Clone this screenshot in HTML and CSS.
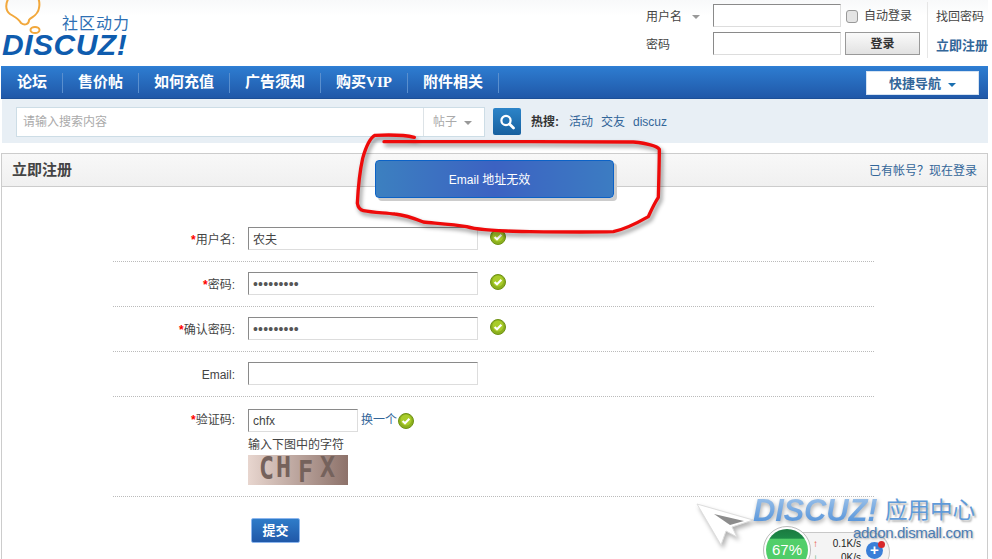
FILE: index.html
```html
<!DOCTYPE html>
<html lang="zh">
<head>
<meta charset="utf-8">
<title>立即注册</title>
<link rel="stylesheet" href="styles.css">
</head>
<body>
<div class="page">
  <header class="head">
    <div class="logo">
      <svg class="bubble" width="40" height="35" viewBox="0 0 40 35">
        <path d="M8 -4 C3 3 3 10 8 14 C13 17 17 19 19 23 C23 26 27 24 27 20 C29 17 36 16 37 8 C38 3 37 -1 35 -4" fill="none" stroke="#f2a83c" stroke-width="2"/>
        <ellipse cx="33" cy="30" rx="4.5" ry="3" fill="none" stroke="#f2a83c" stroke-width="2"/>
      </svg>
      <span class="slogan">社区动力</span>
      <span class="logoword">DISCUZ!</span>
    </div>
    <div class="login">
      <div class="lg-label">用户名 <i class="caret gray"></i></div>
      <input class="field lg-input" type="text">
      <label class="auto"><span class="chk"></span>自动登录</label>
      <div class="lg-label">密码</div>
      <input class="field lg-input" type="password">
      <div class="lg-btn">登录</div>
    </div>
    <div class="lg-links">
      <a class="lost">找回密码</a>
      <a class="reg">立即注册</a>
    </div>
  </header>

  <nav class="nav">
    <ul class="menu">
      <li>论坛</li><li>售价帖</li><li>如何充值</li><li>广告须知</li><li>购买VIP</li><li>附件相关</li>
    </ul>
    <div class="quick">快捷导航<i class="caret blue"></i></div>
  </nav>

  <div class="search">
    <div class="sbox">
      <span class="ph">请输入搜索内容</span>
      <span class="stype">帖子<i class="caret gray"></i></span>
    </div>
    <div class="sbtn">
      <svg width="18" height="18" viewBox="0 0 18 18"><circle cx="8" cy="7.5" r="4.6" fill="none" stroke="#fff" stroke-width="2.2"/><path d="M11.5 11 L15.5 15" stroke="#fff" stroke-width="2.8" stroke-linecap="round"/></svg>
    </div>
    <div class="hot"><b>热搜:</b><a>活动</a><a>交友</a><a>discuz</a></div>
  </div>

  <section class="panel">
    <div class="ptitle"><h2>立即注册</h2><a>已有帐号？现在登录</a></div>
    <form class="form">
      <div class="row">
        <label class="lbl"><em>*</em>用户名:</label>
        <input class="field ipt" type="text" value="农夫">
        <svg class="ok" viewBox="0 0 16 16"><use href="#okmark"/></svg>
      </div>
      <div class="row">
        <label class="lbl"><em>*</em>密码:</label>
        <input class="field ipt pw" type="password" value="123456789">
        <svg class="ok" viewBox="0 0 16 16"><use href="#okmark"/></svg>
      </div>
      <div class="row">
        <label class="lbl"><em>*</em>确认密码:</label>
        <input class="field ipt pw" type="password" value="123456789">
        <svg class="ok" viewBox="0 0 16 16"><use href="#okmark"/></svg>
      </div>
      <div class="row">
        <label class="lbl">Email:</label>
        <input class="field ipt" type="text">
      </div>
      <div class="row cap">
        <label class="lbl"><em>*</em>验证码:</label>
        <div class="capbody">
          <div class="capline">
            <input class="field short" type="text" value="chfx">
            <a class="swap">换一个</a>
            <svg class="ok tight" viewBox="0 0 16 16"><use href="#okmark"/></svg>
          </div>
          <p class="hint">输入下图中的字符</p>
          <div class="capimg"><span class="c1">C</span><span class="c2">H</span><span class="c3">F</span><span class="c4">X</span></div>
        </div>
      </div>
      <div class="submit"><button type="button" class="sub">提交</button></div>
    </form>
  </section>
</div>

<svg class="defs" width="0" height="0">
  <defs>
    <g id="okmark">
      <circle cx="8" cy="8" r="7.5" fill="#8cb01e" stroke="#6f9214" stroke-width="1"/>
      <circle cx="8" cy="7" r="5.5" fill="#a9cc2a"/>
      <path d="M4.6 8 L7 10.3 L11.4 5.8" fill="none" stroke="#fff" stroke-width="2.2"/>
    </g>
  </defs>
</svg>

<div class="toast">Email 地址无效</div>

<svg class="scribble" width="350" height="160" viewBox="0 0 1050 480">
  <path d="M253 142 C225 135 175 134 135 136 C118 145 108 170 98 205 C88 250 84 300 82 340 C84 352 90 360 100 362 C130 368 165 368 195 372 C225 375 245 382 280 396 C320 400 370 403 410 410 C450 422 520 424 600 425 C680 426 780 427 850 425 C885 418 920 400 955 380 C962 365 970 345 985 322 C986 280 988 220 988 178 C978 165 950 160 910 156 C800 156 700 155 600 155 C450 156 300 156 162 155" fill="none" stroke="#ee0a0a" stroke-width="10" stroke-linejoin="round" stroke-linecap="round"/>
</svg>

<div class="widget">
  <div class="ball"><span>67%</span></div>
  <div class="speeds">
    <div class="sp"><i class="up">↑</i><span>0.1K/s</span></div>
    <div class="sp"><i class="down">↓</i><span>0K/s</span></div>
  </div>
  <div class="plus">+</div>
  <div class="dot"></div>
</div>

<div class="mark">
  <svg class="cursor" width="58" height="44" viewBox="0 0 58 44">
    <path d="M1 1 L57 17 L36 24 L41 34 L30 28 L25 42 Z" fill="#fff" stroke="#ddd" stroke-width="1"/>
    <path d="M18 11 L48 18 L34 22 Z" fill="#8c8c8c"/>
  </svg>
  <div class="mark-top"><span class="mark-logo">DISCUZ!</span><span class="mark-cn">应用中心</span></div>
  <div class="mark-url">addon.dismall.com</div>
</div>
</body>
</html>
```

FILE: styles.css
```css
* { box-sizing: border-box; }
html, body { margin: 0; padding: 0; height: 559px; overflow: hidden; background: #fff; }
body { font: 12px/1.4 "Liberation Sans", "Noto Sans CJK SC", sans-serif; color: #444; position: relative; }
a { color: #369; text-decoration: none; }
i { font-style: normal; }
.page { width: 988px; }
.defs { position: absolute; }

.head { height: 66px; display: flex; background: linear-gradient(#f8f9fa, #fff 16px); }
.logo { flex: none; width: 645px; position: relative; }
.bubble { position: absolute; left: 2px; top: 0; }
.slogan { position: absolute; left: 62px; top: 14px; font-size: 16px; line-height: 20px; letter-spacing: 1px; color: #2e70b4; white-space: nowrap; }
.logoword { position: absolute; left: 2px; top: 29px; font: italic bold 30px/32px "Liberation Sans", sans-serif; letter-spacing: .5px; color: #0f5cae; }

.login { flex: none; display: grid; grid-template-columns: 68px 128px 86px; grid-template-rows: 23px 23px; row-gap: 5px; padding-top: 4px; align-items: center; }
.lg-label { color: #444; padding: 3px 0 0 1px; }
.lg-input { width: 128px; height: 23px; }
.auto { display: flex; align-items: center; padding: 2px 0 0 5px; color: #444; white-space: nowrap; }
.chk { flex: none; width: 12px; height: 13px; margin-right: 6px; border: 1px solid #999; border-radius: 3px; background: #e4e4e4; }
.lg-btn { margin-left: 4px; width: 75px; height: 23px; border: 1px solid #999; background: linear-gradient(#fafafa, #e2e2e2); text-align: center; font-weight: bold; line-height: 22px; color: #333; }
.lg-links { flex: none; margin: 2px 0 8px; padding: 7px 0 0 8px; width: 61px; border-left: 1px solid #e6e6e6; display: flex; flex-direction: column; gap: 11px; white-space: nowrap; }
.lost { color: #444; }
.reg { font-weight: bold; font-size: 13px; color: #369; }

.field { border: 1px solid #ddd; border-top-color: #8a8a8a; border-left-color: #8a8a8a; padding: 0 4px; background: #fff; font: 12px "Liberation Sans", "Noto Sans CJK SC", sans-serif; color: #444; outline: 0; border-radius: 0; margin: 0; }

.nav { height: 33px; margin-left: 1px; display: flex; justify-content: space-between; align-items: flex-start; background: linear-gradient(#2f80d6 0, #2d7bcf 6%, #2058a8 100%); border-bottom: 1px solid #1c4f97; }
.menu { list-style: none; margin: 7px 0 0; padding: 0 0 0 1px; display: flex; }
.menu li { height: 20px; padding: 0 15px; border-right: 1px solid #5a8fce; color: #fff; font: bold 15px/19px "Liberation Serif", "Noto Sans CJK SC", serif; white-space: nowrap; }
.quick { margin: 5px 9px 0 0; width: 113px; height: 24px; background: #fff; border: 1px solid #d5e3f2; text-align: center; font-size: 13px; font-weight: bold; line-height: 24px; color: #369; }

.caret { display: inline-block; width: 0; height: 0; border: 4px solid transparent; border-bottom: 0; border-top: 4px solid #999; vertical-align: middle; }
.caret.gray { margin-left: 7px; }
.caret.blue { margin-left: 7px; border-top-color: #1a6fb0; }

.search { height: 44px; margin-left: 2px; padding: 8px 0 0 14px; display: flex; background: #e8eff5; }
.sbox { width: 469px; height: 30px; background: #fff; border: 1px solid #cddde6; display: flex; justify-content: space-between; line-height: 29px; }
.ph { padding-left: 6px; color: #aaa; }
.stype { width: 61px; padding-left: 9px; border-left: 1px solid #dde3e7; color: #aaa; }
.sbtn { margin: 1px 0 0 8px; width: 28px; height: 27px; border-radius: 2px; background: linear-gradient(#2c84c8, #17609f); display: flex; align-items: center; justify-content: center; }
.hot { margin-left: 10px; line-height: 30px; display: flex; color: #333; }
.hot b { margin-right: 10px; }
.hot a { margin-right: 8px; }

.panel { height: 420px; margin: 10px 0 0 1px; border: 1px solid #ccc; }
.ptitle { height: 33px; display: flex; justify-content: space-between; align-items: center; padding: 2px 10px 0; background: linear-gradient(#f8f8f8, #f0f0f0); border-bottom: 1px solid #ccc; }
.ptitle h2 { margin: 0 0 3px; font-size: 15px; color: #444; }

.form { margin: 30px 0 0 111px; width: 761px; }
.row { display: flex; align-items: flex-start; padding: 10px 0 11px; border-bottom: 1px dotted #bbb; height: 45px; }
.lbl { width: 122px; text-align: right; line-height: 27px; white-space: nowrap; color: #444; }
.lbl em { color: #f00; font-style: normal; font-weight: bold; }
.ipt { margin-left: 13px; width: 230px; height: 23px; }
.pw { font-size: 14px; letter-spacing: .2px; color: #555; }
.ok { margin: 2px 0 0 12px; width: 16px; height: 16px; }
.row.cap { height: 100px; padding-top: 12px; }
.cap .lbl { line-height: 23px; }
.capbody { margin-left: 13px; }
.capline { display: flex; align-items: center; height: 23px; }
.short { width: 110px; height: 23px; }
.swap { margin-left: 3px; }
.ok.tight { margin: 0 0 0 1px; }
.hint { margin: 5px 0 1px; line-height: 17px; color: #444; }
.capimg { width: 100px; height: 30px; padding-left: 11px; display: flex; background: linear-gradient(90deg, #e8d6cf, #8d726a); font: bold 25px/30px "DejaVu Sans Mono", monospace; color: #75625c; }
.capimg span { display: block; }
.c1 { width: 17px; transform: translateY(-1px) scaleY(1.25); }
.c2 { width: 22px; transform: translateY(-2px) scaleY(1.15); }
.c3 { width: 22px; transform: translateY(2px) scaleY(1.2); }
.c4 { width: 15px; transform: translateY(-2px) scaleY(1.15); }
.submit { padding: 21px 0 0 138px; }
.sub { width: 49px; height: 25px; padding: 0; border: 1px solid #8cb6ee; border-radius: 2px; background: linear-gradient(#2f7cc9, #2058a8); color: #fff; font: bold 13px/21px "Liberation Sans", "Noto Sans CJK SC", sans-serif; }

.toast { position: absolute; left: 375px; top: 160px; width: 239px; height: 38px; padding-right: 10px; border: 1px solid #0c62c6; border-radius: 4px; background: linear-gradient(90deg, #3c80c0, #3c62c2 50%, #3c7cc2); box-shadow: 3px 3px 0 #ccc; color: #fff; text-align: center; line-height: 39px; }
.scribble { position: absolute; left: 330px; top: 90px; filter: drop-shadow(2px 3px 2px rgba(0,0,0,.45)); }

.mark { position: absolute; left: 696px; top: 496px; width: 285px; height: 50px; }
.cursor { position: absolute; left: 0; top: 7px; filter: drop-shadow(2px 3px 2px rgba(0,0,0,.3)); }
.mark-top { position: absolute; left: 57px; top: 0; display: flex; align-items: center; white-space: nowrap; }
.mark-logo { font: italic bold 31px/30px "Liberation Sans", sans-serif; letter-spacing: -.2px; width: 132px; background: linear-gradient(#9cc2ea, #4f8fd8); -webkit-background-clip: text; background-clip: text; color: transparent; filter: drop-shadow(1px 2px 2px rgba(0,0,0,.35)); }
.mark-cn { font-size: 22.5px; line-height: 26px; color: #5f9ad8; text-shadow: 2px 2px 2px rgba(0,0,0,.3); }
.mark-url { position: absolute; left: 157px; top: 27px; font-size: 15px; letter-spacing: -.3px; line-height: 20px; color: #4b7cb4; text-shadow: 1px 1px 2px rgba(0,0,0,.3); white-space: nowrap; }

.widget { position: absolute; left: 763px; top: 525px; width: 130px; height: 34px; }
.speeds { position: absolute; left: 24px; top: 7px; width: 103px; height: 40px; padding: 4px 0 0 26px; background: #f4f4f4; border: 1px solid #c8c8c8; border-left: 0; border-radius: 0 20px 20px 0; }
.sp { display: flex; justify-content: space-between; width: 48px; font-size: 10px; line-height: 14px; color: #222; }
.sp span { margin-left: 6px; white-space: nowrap; }
.up { color: #e8503a; font-weight: bold; }
.down { color: #2a9a4a; font-weight: bold; }
.ball { position: absolute; left: 0; top: 1px; width: 48px; height: 48px; border-radius: 50%; border: 1px solid #bbb; padding: 2px; background: #fff; z-index: 1; }
.ball span { display: block; height: 42px; border-radius: 50%; background: linear-gradient(#1a7a40 0, #1d8a48 22%, #52cf6a 24%, #4ecb68 100%); color: #fff; font-size: 15px; line-height: 42px; text-align: center; }
.plus { position: absolute; left: 103px; top: 17px; width: 17px; height: 17px; border-radius: 50%; background: #3a7fd8; color: #fff; font: bold 15px/16px "Liberation Sans", sans-serif; text-align: center; }
.dot { position: absolute; left: 115px; top: 16px; width: 7px; height: 7px; border-radius: 50%; background: #d8282c; }
```
